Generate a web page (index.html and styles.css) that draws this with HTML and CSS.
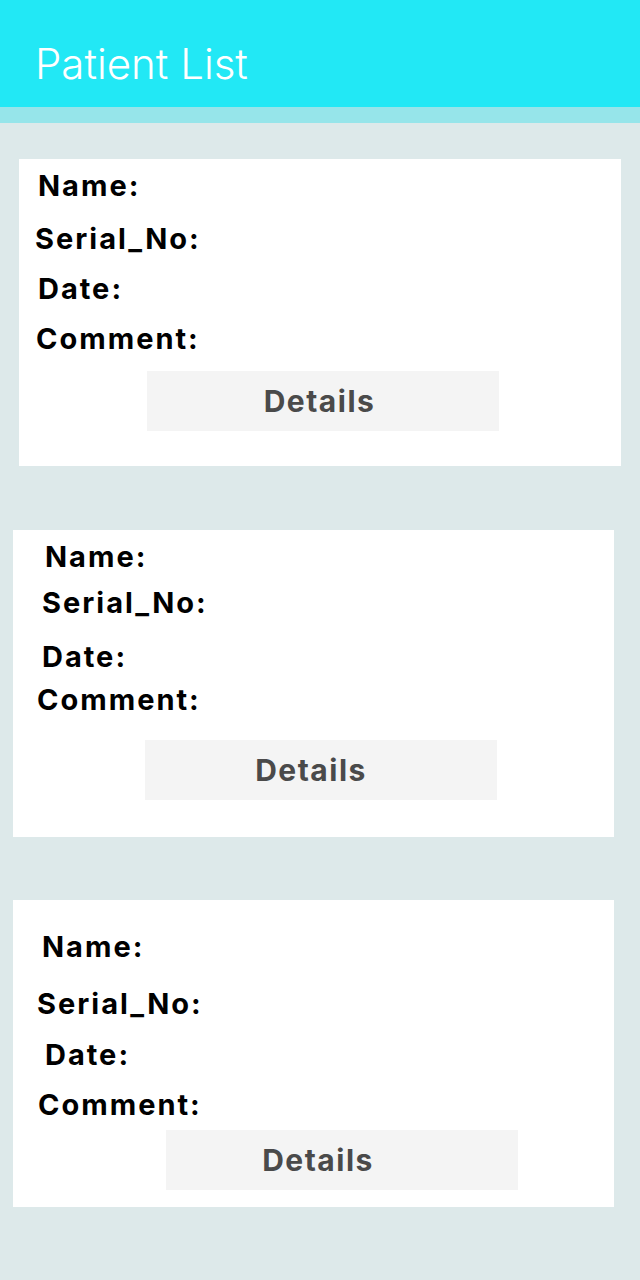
FILE: index.html
```html
<!DOCTYPE html>
<html>
<head>
<meta charset="utf-8">
<link rel="stylesheet" href="styles.css">
</head>
<body>
<header class="appbar"><h1 class="title">Patient List</h1></header>
<div class="strip"></div>
<main class="list">
  <section class="card card-1">
    <div class="row r1">Name:</div>
    <div class="row r2">Serial_No:</div>
    <div class="row r3">Date:</div>
    <div class="row r4">Comment:</div>
    <button class="details">Details</button>
  </section>
  <section class="card card-2">
    <div class="row r1">Name:</div>
    <div class="row r2">Serial_No:</div>
    <div class="row r3">Date:</div>
    <div class="row r4">Comment:</div>
    <button class="details">Details</button>
  </section>
  <section class="card card-3">
    <div class="row r1">Name:</div>
    <div class="row r2">Serial_No:</div>
    <div class="row r3">Date:</div>
    <div class="row r4">Comment:</div>
    <button class="details">Details</button>
  </section>
</main>
</body>
</html>
```
FILE: styles.css
```css
html, body {
  margin: 0;
  padding: 0;
}
body {
  background: #dde9ea;
  font-family: Inter, "Noto Sans", sans-serif;
  width: 640px;
  min-height: 1280px;
}
.appbar {
  height: 107px;
  box-sizing: border-box;
  padding-top: 19px;
  background: #22e8f5;
  display: flex;
  align-items: center;
}
.title {
  margin: 0 0 0 35px;
  font-size: 42px;
  font-weight: 300;
  color: #ffffff;
  letter-spacing: 0;
}
.strip {
  height: 16px;
  background: #96e5ea;
}
.list {
  display: flex;
  flex-direction: column;
}
.card {
  background: #ffffff;
  height: 307px;
  box-sizing: border-box;
  display: flex;
  flex-direction: column;
  align-items: flex-start;
}
.row {
  height: 30px;
  line-height: 30px;
  font-size: 29px;
  font-weight: 700;
  color: #000000;
  letter-spacing: 2px;
  white-space: nowrap;
}
.details {
  width: 352px;
  height: 60px;
  border: none;
  background: #f4f4f4;
  color: #4a4a4a;
  font-family: Inter, "Noto Sans", sans-serif;
  font-size: 30px;
  font-weight: 700;
  letter-spacing: 1.5px;
  padding: 0 7px 0 0;
}

/* card 1 */
.card-1 { margin: 36px 0 0 19px; width: 602px; padding-top: 12px; }
.card-1 .r1 { margin-left: 19px; }
.card-1 .r2 { margin: 23px 0 0 16px; }
.card-1 .r3 { margin: 20px 0 0 19px; }
.card-1 .r4 { margin: 20px 0 0 17px; }
.card-1 .details { margin: 17px 0 0 128px; }

/* card 2 */
.card-2 { margin: 64px 0 0 13px; width: 601px; padding-top: 12px; }
.card-2 .r1 { margin-left: 32px; }
.card-2 .r2 { margin: 16px 0 0 29px; }
.card-2 .r3 { margin: 24px 0 0 29px; }
.card-2 .r4 { margin: 13px 0 0 24px; }
.card-2 .details { margin: 25px 0 0 132px; padding-right: 20px; }

/* card 3 */
.card-3 { margin: 63px 0 0 13px; width: 601px; padding-top: 32px; }
.card-3 .r1 { margin-left: 29px; }
.card-3 .r2 { margin: 27px 0 0 24px; }
.card-3 .r3 { margin: 21px 0 0 32px; }
.card-3 .r4 { margin: 20px 0 0 25px; }
.card-3 .details { margin: 10px 0 0 153px; padding-right: 48px; }
```
